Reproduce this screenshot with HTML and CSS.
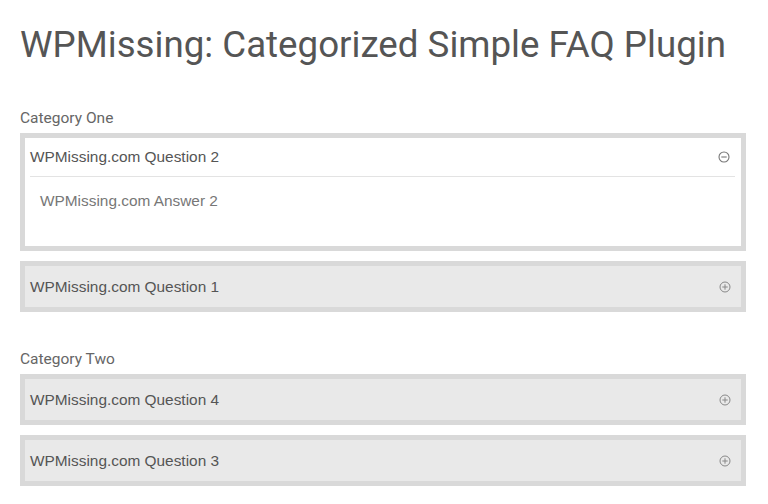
FILE: index.html
```html
<!DOCTYPE html>
<html>
<head>
<meta charset="utf-8">
<link rel="stylesheet" href="styles.css">
</head>
<body>
<div class="page">
  <h1 class="title">WPMissing: Categorized Simple FAQ Plugin</h1>

  <section class="cat cat-one">
    <div class="cat-label">Category One</div>
    <div class="faq open">
      <div class="faq-head">
        <span class="q">WPMissing.com Question 2</span>
        <svg class="ico" width="12" height="12" viewBox="0 0 12 12"><circle cx="6" cy="6" r="5" fill="none" stroke="#777" stroke-width="1.1"/><line x1="3.3" y1="6" x2="8.7" y2="6" stroke="#777" stroke-width="1.1"/></svg>
      </div>
      <div class="faq-body">WPMissing.com Answer 2</div>
    </div>
    <div class="faq">
      <div class="faq-head">
        <span class="q">WPMissing.com Question 1</span>
        <svg class="ico" width="12" height="12" viewBox="0 0 12 12"><circle cx="6" cy="6" r="5" fill="none" stroke="#888" stroke-width="1"/><line x1="3.3" y1="6" x2="8.7" y2="6" stroke="#888" stroke-width="1"/><line x1="6" y1="3.3" x2="6" y2="8.7" stroke="#888" stroke-width="1"/></svg>
      </div>
    </div>
  </section>

  <section class="cat cat-two">
    <div class="cat-label">Category Two</div>
    <div class="faq">
      <div class="faq-head">
        <span class="q">WPMissing.com Question 4</span>
        <svg class="ico" width="12" height="12" viewBox="0 0 12 12"><circle cx="6" cy="6" r="5" fill="none" stroke="#888" stroke-width="1"/><line x1="3.3" y1="6" x2="8.7" y2="6" stroke="#888" stroke-width="1"/><line x1="6" y1="3.3" x2="6" y2="8.7" stroke="#888" stroke-width="1"/></svg>
      </div>
    </div>
    <div class="faq">
      <div class="faq-head">
        <span class="q">WPMissing.com Question 3</span>
        <svg class="ico" width="12" height="12" viewBox="0 0 12 12"><circle cx="6" cy="6" r="5" fill="none" stroke="#888" stroke-width="1"/><line x1="3.3" y1="6" x2="8.7" y2="6" stroke="#888" stroke-width="1"/><line x1="6" y1="3.3" x2="6" y2="8.7" stroke="#888" stroke-width="1"/></svg>
      </div>
    </div>
  </section>
</div>
</body>
</html>
```

FILE: styles.css
```css
* { box-sizing: border-box; }
html, body { margin: 0; padding: 0; background: #fff; }
.page {
  padding: 0 22px 0 20px;
  width: 768px;
}
.title {
  font-family: Roboto, "Liberation Sans", sans-serif;
  font-weight: 400;
  font-size: 36.7px;
  line-height: 44px;
  color: #555;
  margin: 23px 0 0 0;
}
.cat-one { margin-top: 42px; }
.cat-two { margin-top: 38px; }
.cat-label {
  font-family: Roboto, "Liberation Sans", sans-serif;
  font-size: 15.5px;
  line-height: 18px;
  color: #666;
  margin-bottom: 6px;
}
.faq {
  border: 5px solid #d9d9d9;
  background: #e9e9e9;
  margin-bottom: 10px;
}
.faq.open { background: #fff; }
.faq-head {
  display: flex;
  align-items: center;
  justify-content: space-between;
  height: 41px;
  padding: 0 10px 0 5px;
  font-family: "Liberation Sans", Arial, sans-serif;
  font-size: 15.4px;
  color: #555;
}
.faq.open .faq-head {
  height: 39px;
  margin: 0 6px 0 5px;
  padding: 0 5px 0 0;
  border-bottom: 1px solid #e3e3e3;
}
.ico { display: block; }
.faq-body {
  padding: 15px 15px 0 15px;
  height: 69px;
  font-family: "Liberation Sans", Arial, sans-serif;
  font-size: 15.4px;
  color: #777;
}
```
